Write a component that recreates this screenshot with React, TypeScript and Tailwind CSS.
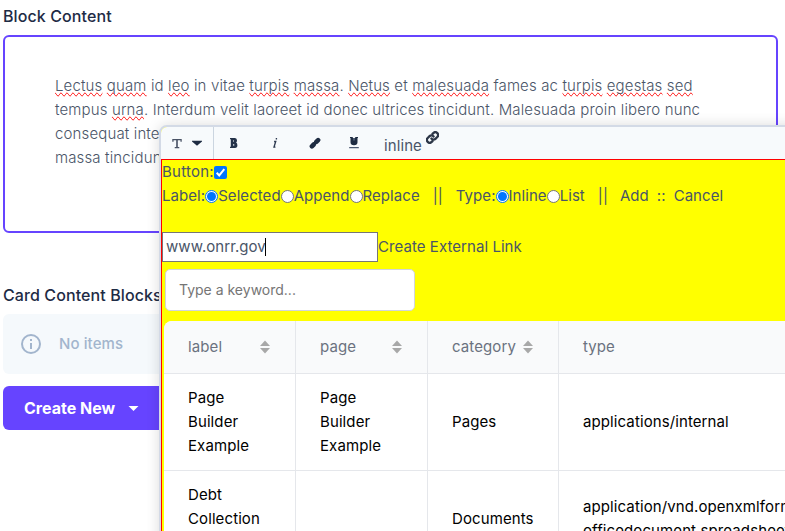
import type { ReactNode } from "react";

function Misspelled({ children }: { children: ReactNode }) {
  return <span className="[text-decoration-line:spelling-error]">{children}</span>;
}

function Sort() {
  return (
    <svg width="10" height="14" viewBox="0 0 10 14" fill="#a8a8a8" className="shrink-0">
      <path d="M5 0.5 10 6H0Z" />
      <path d="M5 13.5 10 8H0Z" />
    </svg>
  );
}

function Radio({ checked = false }: { checked?: boolean }) {
  return (
    <span
      className={
        checked
          ? "flex size-[13px] shrink-0 items-center justify-center rounded-full border border-[#0075ff] bg-white"
          : "flex size-[13px] shrink-0 items-center justify-center rounded-full border border-[#767676] bg-white"
      }
    >
      {checked && <span className="size-[9px] rounded-full bg-[#0075ff]" />}
    </span>
  );
}

function Toolbar() {
  return (
    <div className="flex h-8 bg-[#f7fafc] text-[#2d3a50]">
      <div className="flex w-[53px] shrink-0 items-center border-r border-[#cbd5e0] pl-[11px]">
        <svg width="10" height="11" viewBox="0 0 11 11" fill="none" stroke="#4a5366">
          <path d="M1 3.5V1.3H10V3.5" strokeWidth="1.4" />
          <path d="M5.5 1V10" strokeWidth="1.8" />
          <path d="M3 10H8" strokeWidth="1.4" />
        </svg>
        <svg width="10" height="6" viewBox="0 0 11 6" className="ml-[10px]" fill="#1e2c42">
          <path d="M0 0.4H11V1.4L5.5 6L0 1.4Z" />
        </svg>
      </div>
      <div className="flex items-center">
        <svg width="8" height="10" viewBox="0 0 8 10" className="ml-4" fill="#25334a" fillRule="evenodd">
          <path d="M0 0H5Q7 0 7 2.5Q7 4 6.1 4.6Q7.4 5.2 7.4 7.3Q7.4 10 5 10H0V8.8H.8V1.2H0ZM3.3 2.3V3.8H4V2.3ZM3.3 6V7.7H4.2V6Z" />
        </svg>
        <svg width="6" height="10" viewBox="0 0 6 11" className="ml-[34px]" fill="none" stroke="#2d3a50" strokeWidth="1.5">
          <path d="M3.8 0.8H5.3M2 3.8H3.8L1.9 10H3.5" />
        </svg>
        <svg width="12" height="12" viewBox="0 0 12 12" className="ml-[31px]" fill="none" stroke="#1e2c42" strokeLinecap="round">
          <path d="M2.9 9.3L4.7 7.5" strokeWidth="4.6" />
          <path d="M7.3 4.9L9.1 3.1" strokeWidth="4.6" />
          <path d="M4 8L8 4" strokeWidth="2.5" />
        </svg>
        <svg width="10" height="12" viewBox="0 0 10 12" className="ml-[28px]" fill="#1e2c42">
          <path d="M1 0H3.8V1H6.2V0H9V1H8.5V5.2Q8.5 8.2 5 8.2Q1.5 8.2 1.5 5.2V1H1Z" />
          <path d="M4.2 1H5.8V3.5H4.2Z" fill="#56647a" />
          <path d="M.2 10H9.8V11.3H.2Z" fill="#4a5870" />
        </svg>
        <span className="mt-[6px] ml-[25px] text-[#4a5568] tracking-[0.1px]">inline</span>
        <svg width="13" height="13" viewBox="0 0 24 24" className="-mt-[11px] ml-1" fill="none" stroke="#2d3748" strokeWidth="4.3" strokeLinecap="round">
          <path d="M10 14a5 5 0 0 0 7.4.4l3.4-3.4a5 5 0 0 0-7.2-7.2L12 5.4" />
          <path d="M14 10a5 5 0 0 0-7.4-.4L3.2 13a5 5 0 0 0 7.2 7.2L12 18.6" />
        </svg>
      </div>
    </div>
  );
}

function LinkForm() {
  return (
    <div className="tracking-[0.06px] text-[#4a5568]">
      <div className="flex h-6 items-center">
        <span className="tracking-[0.25px]">Button:</span>
        <svg width="13" height="13" viewBox="0 0 13 13">
          <rect width="13" height="13" rx="2" fill="#0075ff" />
          <path d="M2.7 6.8 5.2 9.4 10.3 3.2" fill="none" stroke="#fff" strokeWidth="2" />
        </svg>
      </div>
      <div className="flex h-6 items-center whitespace-pre">
        <span>Label:</span>
        <Radio checked />
        <span>Selected</span>
        <Radio />
        <span>Append</span>
        <Radio />
        <span>Replace</span>
        <span className="ml-[13px]">||</span>
        <span className="ml-[13px]">Type:</span>
        <Radio checked />
        <span>Inline</span>
        <Radio />
        <span>List</span>
        <span className="ml-[13px]">||</span>
        <span className="ml-[12px]">Add</span>
        <span className="ml-2">::</span>
        <span className="ml-2">Cancel</span>
      </div>
      <div className="mt-6 flex h-[30px] items-center">
        <div className="flex h-[30px] w-[216px] items-center border border-[#767676] bg-white pl-[3px]">
          <span>www.onrr.gov</span>
          <span className="-ml-px h-[18px] w-px bg-black" />
        </div>
        <span>Create External Link</span>
      </div>
    </div>
  );
}

function DataTable() {
  const cell = "border-r border-b border-[#e5e7eb] px-6 flex items-center";
  return (
    <div className="ml-[2px] grid w-[700px] grid-cols-[132px_132px_131px_305px] grid-rows-[53px_97px_97px] overflow-hidden rounded-tl-lg bg-white tracking-[0.1px] text-black">
      {["label", "page", "category"].map((name) => (
        <div key={name} className="flex items-center justify-between border-r border-b border-[#e5e7eb] bg-[#f9fafb] pr-[25px] pl-6 text-[#6b7280]">
          <span>{name}</span>
          <Sort />
        </div>
      ))}
      <div className="flex items-center border-b border-[#e5e7eb] bg-[#f9fafb] px-6 text-[#6b7280]">type</div>
      <div className={cell}>Page Builder Example</div>
      <div className={cell}>Page Builder Example</div>
      <div className={cell}>Pages</div>
      <div className={cell}>applications/internal</div>
      <div className={cell}>Debt Collection Guide</div>
      <div className={cell} />
      <div className={cell}>Documents</div>
      <div className={cell}>
        <span>
          application/vnd.openxmlformats-
          <br />
          officedocument.spreadsheetml.sheet
        </span>
      </div>
    </div>
  );
}

export default function App() {
  return (
    <div className="relative h-[531px] w-[785px] overflow-hidden bg-white pl-[3px] font-['Inter',sans-serif] text-[15px] leading-6 text-[#4a5568]">
      <div className="pt-1 text-base font-medium tracking-[0.1px] text-[#1e2b45]">Block Content</div>
      <div className="mt-[7px] h-[198px] w-[775px] rounded-md border-2 border-[#6644ff] pt-[37px] pl-[50px] font-[350] tracking-[0.14px] whitespace-nowrap">
        <p>
          <Misspelled>Lectus</Misspelled> <Misspelled>quam</Misspelled> id <Misspelled>leo</Misspelled> in vitae{" "}
          <Misspelled>turpis</Misspelled> <Misspelled>massa</Misspelled>. <Misspelled>Netus</Misspelled> et{" "}
          <Misspelled>malesuada</Misspelled> fames ac <Misspelled>turpis</Misspelled> <Misspelled>egestas</Misspelled>{" "}
          <Misspelled>sed</Misspelled>
          <br />
          tempus <Misspelled>urna</Misspelled>. Interdum velit laoreet id donec ultrices tincidunt. Malesuada proin libero nunc
          <br />
          consequat interdum
          <br />
          massa tincidunt
        </p>
      </div>
      <div className="mt-[50px] text-base font-medium tracking-[0.1px] text-[#1e2b45]">Card Content Blocks</div>
      <div className="mt-[7px] flex h-[60px] w-[775px] items-center rounded-md bg-[#f5f9fc] pl-[18px] font-medium text-[#a2b5cd]">
        <svg width="20" height="20" viewBox="0 0 20 20" fill="none" stroke="#a2b5cd" strokeWidth="2">
          <circle cx="10" cy="10" r="9" />
          <path d="M10 9V15M10 5V7" />
        </svg>
        <span className="ml-[18px] tracking-[0.1px]">No items</span>
      </div>
      <div className="mt-3 flex h-11 w-[200px] items-center rounded-md bg-[#6644ff] pl-[21px] text-base font-bold text-white">
        Create New
        <svg width="11" height="5" viewBox="0 0 10 5" fill="#fff" className="ml-[13px]">
          <path d="M0 0H10L5 5Z" />
        </svg>
      </div>

      <div className="absolute top-[125px] left-[159px] h-[500px] w-[750px] overflow-hidden rounded-lg border-2 border-[#d3dae6] bg-[#ffff00] shadow-[0_0_14px_rgba(0,0,0,0.14)]">
        <Toolbar />
        <div className="h-[466px] border border-[#ff0000]">
          <LinkForm />
          <div className="mt-[7px] ml-[3px] flex h-[42px] w-[250px] items-center rounded-[5px] border border-[#d1d5db] bg-white pl-[13px] text-sm text-[#757575]">
            Type a keyword...
          </div>
          <div className="h-[10px]" />
          <DataTable />
        </div>
      </div>
    </div>
  );
}
